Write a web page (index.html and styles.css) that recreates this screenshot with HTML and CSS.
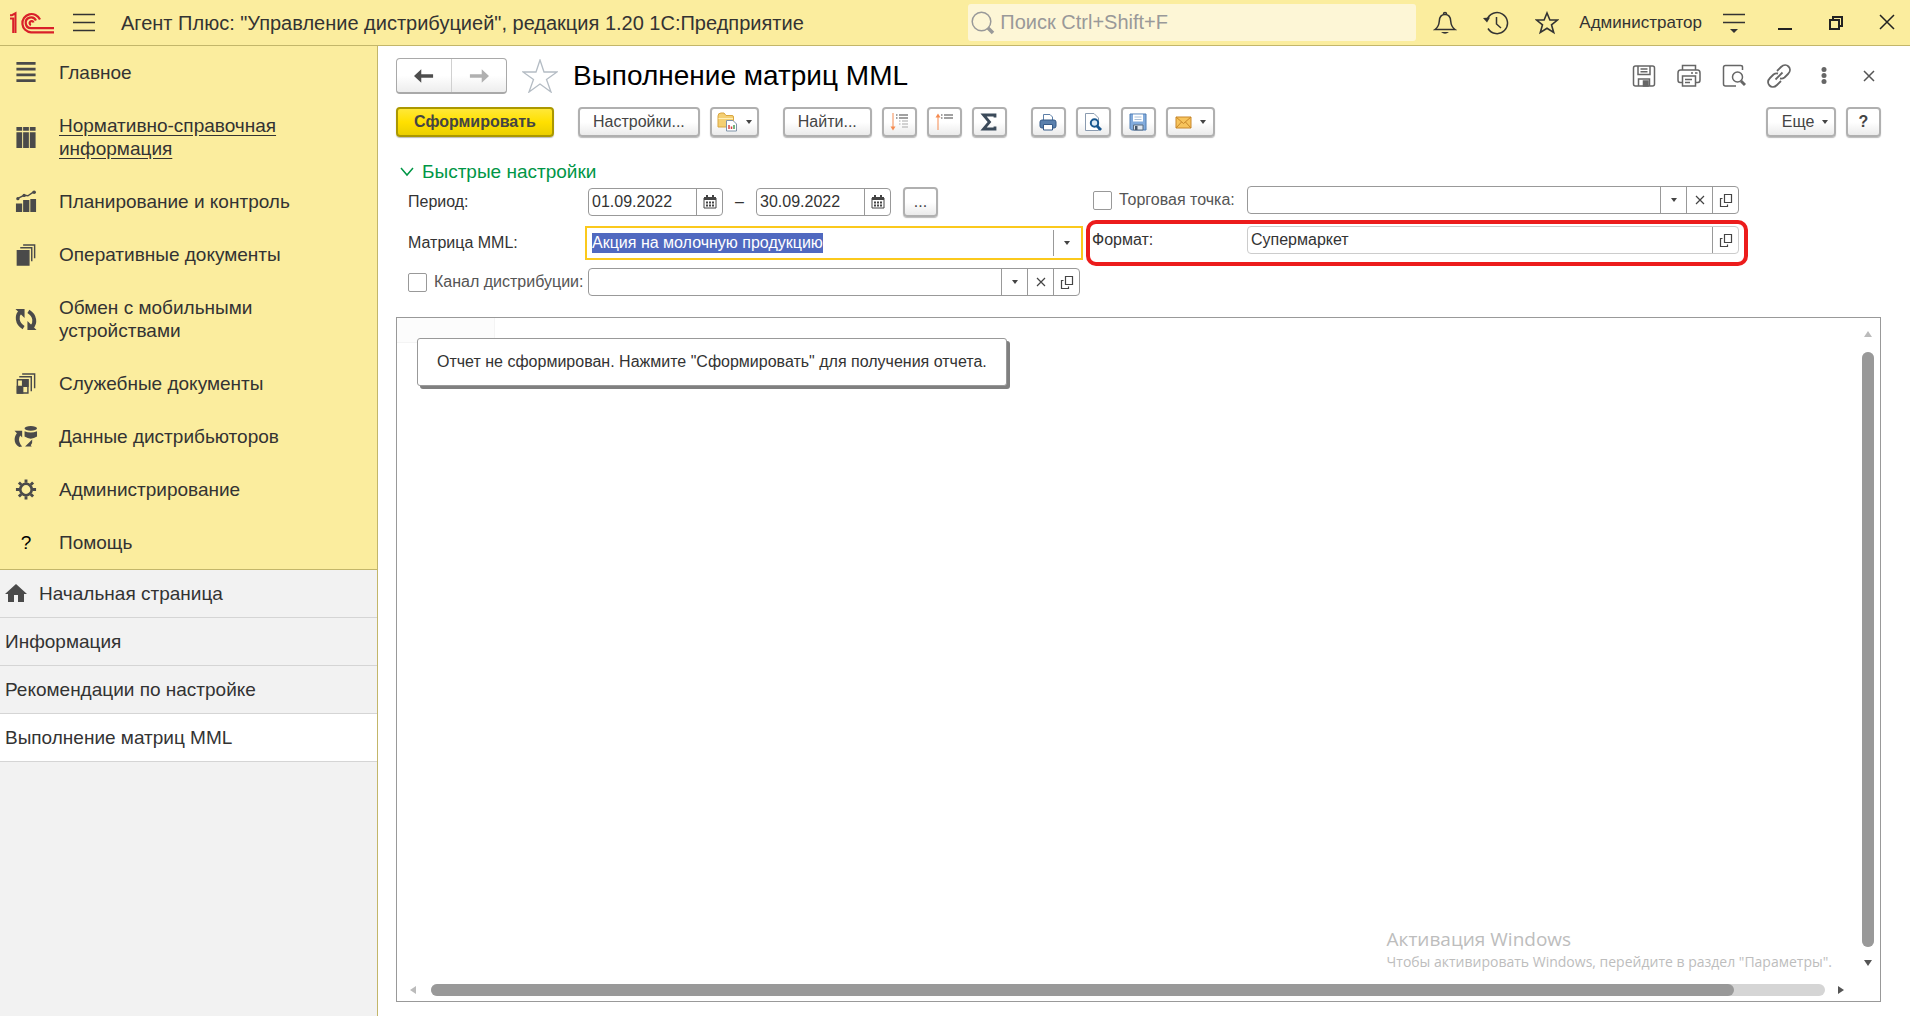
FILE: index.html
```html
<!DOCTYPE html>
<html lang="ru">
  <head>
    <meta charset="utf-8">
    <meta name="viewport" content="width=device-width, initial-scale=1.0">
    <title>Выполнение матриц MML</title>
    <link rel="stylesheet" href="styles.css">
  </head>
  <body>
    <header class="topbar">
      <svg class="logo" width="46" height="24" viewBox="0 0 46 24" fill="none" stroke="#d9202a" stroke-width="2.2">
        <path d="M1 7.500H4.200V22M1 4.200H3L6.500 2.300V22" stroke-width="2"/>
        <path d="M31 8.500A9.200 9.200 0 1 0 22 21.400H45"/>
        <path d="M27 9.500A5.400 5.400 0 1 0 22 17.200H45"/>
        <path d="M24.500 11.500A2 2 0 1 0 22 14"/>
      </svg>
      <button class="icon" aria-label="Меню">
        <svg width="24" height="24" viewBox="0 0 24 24" stroke="#333" stroke-width="1.500"><path d="M1 3.500H23M1 11.500H23M1 19.500H23"/></svg>
      </button>
      <div class="appTitle">Агент Плюс: "Управление дистрибуцией", редакция 1.20 1С:Предприятие</div>
      <div class="search">
        <svg width="24" height="24" viewBox="0 0 24 24" fill="none" stroke="#999"><circle cx="10.500" cy="10.500" r="9.300" stroke-width="1.500"/><path d="M17 17L22 22" stroke-width="3.500"/></svg>
        <input type="text" placeholder="Поиск Ctrl+Shift+F" aria-label="Поиск">
      </div>
      <div class="topTools">
        <button class="icon" aria-label="Уведомления">
          <svg width="24" height="24" viewBox="0 0 24 24" fill="none" stroke="#333" stroke-width="1.500"><path d="M2 18.500C5.500 16 6 14 6.300 10C6.500 6 8.500 3.500 12 3.500S17.500 6 17.700 10C18 14 18.500 16 22 18.500Z"/><path d="M10.500 3A1.500 1.500 0 0 1 13.500 3"/><path d="M8 21H16Q12 24.500 8 21Z" fill="#333" stroke="none"/></svg>
        </button>
        <button class="icon" aria-label="История">
          <svg width="26" height="24" viewBox="0 0 26 24" fill="none" stroke="#333" stroke-width="1.500"><path d="M4 9A10.500 10.500 0 1 1 5 17.500"/><path d="M0 7L7 6.500L4 11.500Z" fill="#333" stroke="none"/><path d="M13.500 6V13L18 17"/></svg>
        </button>
        <button class="icon" aria-label="Избранное">
          <svg width="24" height="24" viewBox="0 0 24 24" fill="none" stroke="#333" stroke-width="1.600"><path d="M12 2L14.900 9H22.500L16.500 13.800L18.700 21.500L12 17.300L5.300 21.500L7.500 13.800L1.500 9H9.100Z"/></svg>
        </button>
        <span class="user">Администратор</span>
        <button class="icon" aria-label="Сервис">
          <svg width="24" height="24" viewBox="0 0 24 24"><path d="M1 3.500H23M1 11.500H23" stroke="#333" stroke-width="1.500"/><path d="M8 18H16L12 22Z" fill="#333"/></svg>
        </button>
        <button class="icon" aria-label="Свернуть">
          <svg width="24" height="24" viewBox="0 0 24 24"><path d="M5 18H19" stroke="#222" stroke-width="2"/></svg>
        </button>
        <button class="icon" aria-label="Восстановить">
          <svg width="24" height="24" viewBox="0 0 24 24" fill="none" stroke="#222" stroke-width="2"><path d="M6 9H15V18H6ZM9 9V6H18V15H15"/></svg>
        </button>
        <button class="icon" aria-label="Закрыть">
          <svg width="24" height="24" viewBox="0 0 24 24" stroke="#222" stroke-width="1.500"><path d="M5 4L19 18M19 4L5 18"/></svg>
        </button>
      </div>
    </header>
    <div class="workspace">
      <aside class="sidebar">
        <nav class="sections">
          <a href="#">
            <svg width="24" height="24" viewBox="0 0 24 24" stroke="#4a4a4a" stroke-width="3"><path d="M2 2.500H22M2 8.500H22M2 14.500H22M2 20.500H22"/></svg>
            <span>Главное</span>
          </a>
          <a href="#" class="hovered">
            <svg width="24" height="24" viewBox="0 0 24 24" fill="#4a4a4a"><path d="M2 1H8V5H2ZM9 1H15V5H9ZM16 1H22V5H16ZM2 6.500H8V23H2ZM9 6.500H15V23H9ZM16 6.500H22V23H16Z"/></svg>
            <span>Нормативно-справочная информация</span>
          </a>
          <a href="#">
            <svg width="24" height="24" viewBox="0 0 24 24" fill="#4a4a4a"><path d="M1.500 14H8V23H1.500ZM9 10.500H15.500V23H9ZM16.500 9.500H22.500V23H16.500Z"/><path d="M3 9L10 5.500L14 6L20 2" fill="none" stroke="#4a4a4a" stroke-width="1.500"/><circle cx="3.500" cy="9" r="1.700"/><circle cx="10" cy="5.700" r="1.700"/><circle cx="20.500" cy="2.300" r="1.900"/></svg>
            <span>Планирование и контроль</span>
          </a>
          <a href="#">
            <svg width="24" height="24" viewBox="0 0 24 24" fill="none" stroke="#4a4a4a" stroke-width="1.500"><path d="M3 8H15V23H3Z" fill="#4a4a4a"/><path d="M6 5H18V19M9 2H21V16"/></svg>
            <span>Оперативные документы</span>
          </a>
          <a href="#">
            <svg width="24" height="24" viewBox="0 0 24 24" fill="none" stroke="#4a4a4a" stroke-width="4"><path d="M6 4C2 8 2 16 9.500 20.500"/><path d="M18 20C22 16 22 8 14.500 3.500"/><path d="M1 1H10.500V10.500ZM23 23H13.500V13.500Z" fill="#4a4a4a" stroke="none"/></svg>
            <span>Обмен с мобильными устройствами</span>
          </a>
          <a href="#">
            <svg width="24" height="24" viewBox="0 0 24 24" fill="none" stroke="#4a4a4a" stroke-width="1.500"><path d="M3 8H14V22H3Z"/><path d="M8.500 8H14V15H8.500ZM3 15H8.500V22H3Z" fill="#4a4a4a"/><path d="M5 5H17.500V20M8 2H21V17"/></svg>
            <span>Служебные документы</span>
          </a>
          <a href="#">
            <svg width="24" height="24" viewBox="0 0 24 24" fill="#4a4a4a"><ellipse cx="17" cy="3.500" rx="6.500" ry="2.500"/><path d="M10.500 6.500Q17 9 23.500 6.500V12Q17 16.500 10.500 12Z"/><path d="M0 6H8V13L6 11C4 14 4 18 8 22.500L5 23C-1 20 -1 13 2.500 8.500Z"/><path d="M18.500 15L11 22.500H18L17 21Q19 19 18.500 15Z"/></svg>
            <span>Данные дистрибьюторов</span>
          </a>
          <a href="#">
            <svg width="24" height="24" viewBox="0 0 24 24" fill="none" stroke="#4a4a4a"><circle cx="12" cy="12" r="6" stroke-width="2.800"/><path d="M12 1.500V5M12 19V22.500M1.500 12H5M19 12H22.500M4.600 4.600L7 7M17 17L19.400 19.400M19.400 4.600L17 7M7 17L4.600 19.400" stroke-width="3"/></svg>
            <span>Администрирование</span>
          </a>
          <a href="#">
            <span class="question">?</span>
            <span>Помощь</span>
          </a>
        </nav>
        <nav class="windows">
          <a href="#">
            <svg width="22" height="20" viewBox="0 0 22 20" fill="#4a4a4a"><path d="M11 0L22 10H19V18H13V11H9V18H3V10H0Z"/></svg>
            Начальная страница
          </a>
          <a href="#">Информация</a>
          <a href="#">Рекомендации по настройке</a>
          <a href="#" class="active">Выполнение матриц MML</a>
        </nav>
      </aside>
      <main>
        <div class="pageHead">
          <div class="history">
            <button aria-label="Назад"><svg width="20" height="18" viewBox="0 0 22 18"><path d="M0 9L8 1.500V7H21V11H8V16.500Z" fill="#4d4d4d"/></svg></button>
            <button aria-label="Вперед"><svg width="20" height="18" viewBox="0 0 22 18"><path d="M22 9L14 1.500V7H1V11H14V16.500Z" fill="#b0b0b0"/></svg></button>
          </div>
          <button class="icon" aria-label="В избранное">
            <svg width="36" height="34" viewBox="0 0 36 34" fill="none" stroke="#b4bcc4" stroke-width="1.300"><path d="M18 1L22 13H35L24.500 20.500L29 33L18 25L7 33L11.500 20.500L1 13H14Z"/></svg>
          </button>
          <h1>Выполнение матриц MML</h1>
          <div class="pageTools">
            <button class="icon" aria-label="Сохранить">
              <svg width="24" height="24" viewBox="0 0 24 24" fill="none" stroke="#666" stroke-width="1.500"><rect x="1.500" y="2" width="21" height="20" rx="2"/><path d="M6 2V10.500H18V2M8.500 5H15.500M8.500 7.800H15.500M6.500 22V15H17.500V22"/><path d="M11.500 17H16V22H11.500Z" fill="#666"/></svg>
            </button>
            <button class="icon" aria-label="Печать">
              <svg width="24" height="24" viewBox="0 0 24 24" fill="none" stroke="#666" stroke-width="1.500"><path d="M5.500 6V1.500H18.500V6M5 18.500H3Q1 18.500 1 16V9Q1 6 3.500 6H20.500Q23 6 23 9V16Q23 18.500 21 18.500H19M5.500 12H18.500V22H5.500Z"/><path d="M8 15.500H15M8 18.500H13M14 9H16M18 9H20.500"/></svg>
            </button>
            <button class="icon" aria-label="Просмотр">
              <svg width="24" height="24" viewBox="0 0 24 24" fill="none" stroke="#666" stroke-width="1.500"><path d="M20.500 6V3Q20.500 1.500 18.500 1.500H3.500Q1.500 1.500 1.500 3.500V20Q1.500 22 3.500 22H14"/><circle cx="15.500" cy="13" r="5"/><path d="M19 17L23 21" stroke-width="3"/></svg>
            </button>
            <button class="icon" aria-label="Ссылка">
              <svg width="24" height="24" viewBox="0 0 24 24" fill="none" stroke="#666" stroke-width="1.800"><path d="M10 7L14 3C17 0 20 1 21.500 2.500S24 7 21 10L17.500 13.500Q15.500 15 13 14.500M14 17L10 21C7 24 4 23 2.500 21.500S0 17 3 14L6.500 10.500Q8.500 9 11 9.500M8.500 15.500L15.500 8.500"/></svg>
            </button>
            <button class="icon" aria-label="Еще">
              <svg width="24" height="24" viewBox="0 0 24 24" fill="#666"><circle cx="12" cy="5.500" r="2.500"/><circle cx="12" cy="11.500" r="2.500"/><circle cx="12" cy="17.500" r="2.500"/></svg>
            </button>
            <button class="icon" aria-label="Закрыть">
              <svg width="24" height="24" viewBox="0 0 24 24" stroke="#555" stroke-width="1.500"><path d="M7 7L17 17M17 7L7 17"/></svg>
            </button>
          </div>
        </div>

        <div class="toolbar">
          <div class="group">
            <button class="button primary">Сформировать</button>
          </div>
          <div class="group">
            <button class="button wide">Настройки...</button>
            <button class="button drop" aria-label="Варианты">
              <svg width="21" height="20" viewBox="0 0 21 20"><path d="M1 4Q1 1 4 1H7L9 3.500H15Q16.500 3.500 16.500 5V15H1Z" fill="#f4cf72" stroke="#d9a640"/><path d="M1.500 6.500H16" stroke="#fff0b8"/><path d="M9.500 8.500H16L19.500 12V19H9.500Z" fill="#fff" stroke="#7f93a8"/><path d="M12 13V17M14.500 14.500V17" stroke="#d84343" stroke-width="1.500"/><path d="M17 13V17" stroke="#4a9d55" stroke-width="1.500"/></svg>
              <i class="arrow"></i>
            </button>
          </div>
          <div class="group">
            <button class="button wide">Найти...</button>
            <button class="button square" aria-label="Развернуть группы">
              <svg width="20" height="20" viewBox="0 0 20 20"><path d="M4 1V15" stroke="#f58b50"/><path d="M1.500 14.500H6.500L4 18.500Z" fill="#f58b50"/><path d="M7 3H8.500M10 3H19M7 6H8.500M10 6H19" stroke="#444" stroke-width="1.200"/><path d="M10 9H11.500M13 9H19M10 12H11.500M13 12H19M13 15H19" stroke="#aaa" stroke-width="1.200"/></svg>
            </button>
            <button class="button square" aria-label="Свернуть группы">
              <svg width="20" height="20" viewBox="0 0 20 20"><path d="M4 18V5" stroke="#f58b50"/><path d="M1.500 5.500H6.500L4 1.500Z" fill="#f58b50"/><path d="M7 3H8.500M10 3H19M7 6H8.500M10 6H19" stroke="#444" stroke-width="1.200"/></svg>
            </button>
            <button class="button square" aria-label="Сумма">
              <svg width="18" height="18" viewBox="0 0 18 18"><path d="M15 4.500V2H3.500L9.500 9L3.500 16H15V13.500" fill="none" stroke="#3b4a5a" stroke-width="2.800"/></svg>
            </button>
          </div>
          <div class="group">
            <button class="button square" aria-label="Печать">
              <svg width="18" height="18" viewBox="0 0 18 18"><path d="M4.500 7V1.500H11L13.500 4V7" fill="#fff" stroke="#5d7fa8"/><rect x="1" y="7" width="16" height="8" rx="2" fill="#5a80ad" stroke="#355a88"/><path d="M4.500 11.500H13.500V17H4.500Z" fill="#fff" stroke="#355a88"/></svg>
            </button>
            <button class="button square" aria-label="Предварительный просмотр">
              <svg width="18" height="20" viewBox="0 0 18 20"><path d="M1.500 1.500H10L14.500 6V18.500H1.500Z" fill="#fff" stroke="#8a9bb0"/><circle cx="10.500" cy="11" r="3.700" fill="#dceaf5" stroke="#17568f" stroke-width="2"/><path d="M13 14L17 18" stroke="#17568f" stroke-width="2.800"/></svg>
            </button>
            <button class="button square" aria-label="Сохранить">
              <svg width="18" height="18" viewBox="0 0 18 18"><path d="M1 1H17V17H2.500L1 15.500Z" fill="#82abdc" stroke="#4f7cb3"/><path d="M4 1.500H14V8.500H4Z" fill="#fff"/><path d="M5.500 4H12.500M5.500 6.500H12.500" stroke="#a8bfd8"/><path d="M4.500 12H14V17H4.500Z" fill="#dfe6ee" stroke="#5b6c80"/><path d="M6 13H8.500V17H6Z" fill="#44566b"/></svg>
            </button>
            <button class="button drop" aria-label="Отправить">
              <svg width="17" height="13" viewBox="0 0 17 13"><path d="M1 1H16V12H1Z" fill="#f7c45c" stroke="#c8872a"/><path d="M1 1L8.500 7.500L16 1M1 12L6.500 6M16 12L10.500 6" fill="none" stroke="#c8872a"/></svg>
              <i class="arrow"></i>
            </button>
          </div>
          <div class="group last">
            <button class="button drop more">Еще<i class="arrow"></i></button>
            <button class="button square"><b>?</b></button>
          </div>
        </div>

        <h2>
          <svg width="16" height="12" viewBox="0 0 16 12" fill="none" stroke="#009646" stroke-width="1.500"><path d="M2 2L8 9L14 2"/></svg>
          Быстрые настройки
        </h2>

        <form class="settings" onsubmit="return false">
          <div class="column">
            <div class="row periodRow">
              <label class="caption" for="date-from">Период:</label>
              <div class="field date">
                <input id="date-from" type="text" value="01.09.2022">
                <button type="button" aria-label="Календарь"><svg width="14" height="14" viewBox="0 0 14 14"><use href="#calendar"/></svg></button>
              </div>
              <span class="dash">–</span>
              <div class="field date">
                <input id="date-to" type="text" value="30.09.2022" aria-label="Конец периода">
                <button type="button" aria-label="Календарь"><svg width="14" height="14" viewBox="0 0 14 14"><use href="#calendar"/></svg></button>
              </div>
              <button type="button" class="button square dots">...</button>
            </div>
            <div class="row focusRow">
              <label class="caption" for="matrix">Матрица MML:</label>
              <div class="field focused">
                <input id="matrix" type="text" value="Акция на молочную продукцию">
                <button type="button" aria-label="Выбрать"><i class="arrow"></i></button>
              </div>
            </div>
            <div class="row">
              <div class="caption check">
                <input id="channel-on" type="checkbox">
                <label for="channel-on">Канал дистрибуции:</label>
              </div>
              <div class="field">
                <input id="channel" type="text" aria-label="Канал дистрибуции">
                <button type="button" aria-label="Выбрать"><i class="arrow"></i></button>
                <button type="button" aria-label="Очистить"><svg width="10" height="10" viewBox="0 0 10 10"><use href="#cross"/></svg></button>
                <button type="button" aria-label="Открыть"><svg width="14" height="14" viewBox="0 0 14 14"><use href="#open"/></svg></button>
              </div>
            </div>
          </div>
          <div class="column right">
            <div class="row">
              <div class="caption check">
                <input id="outlet-on" type="checkbox">
                <label for="outlet-on">Торговая точка:</label>
              </div>
              <div class="field">
                <input id="outlet" type="text" aria-label="Торговая точка">
                <button type="button" aria-label="Выбрать"><i class="arrow"></i></button>
                <button type="button" aria-label="Очистить"><svg width="10" height="10" viewBox="0 0 10 10"><use href="#cross"/></svg></button>
                <button type="button" aria-label="Открыть"><svg width="14" height="14" viewBox="0 0 14 14"><use href="#open"/></svg></button>
              </div>
            </div>
            <div class="row marked">
              <label class="caption" for="format">Формат:</label>
              <div class="field readonly">
                <input id="format" type="text" value="Супермаркет" readonly>
                <button type="button" aria-label="Открыть"><svg width="14" height="14" viewBox="0 0 14 14"><use href="#open"/></svg></button>
              </div>
            </div>
          </div>
        </form>

        <section class="report">
          <div class="sheet">
            <div class="cell"></div>
            <p class="message">Отчет не сформирован. Нажмите "Сформировать" для получения отчета.</p>
            <div class="watermark">
              <strong>Активация Windows</strong>
              <span>Чтобы активировать Windows, перейдите в раздел "Параметры".</span>
            </div>
          </div>
          <div class="scroll vertical">
            <i class="tip up"></i>
            <div class="track"><div class="thumb"></div></div>
            <i class="tip down"></i>
          </div>
          <div class="scroll horizontal">
            <i class="tip left"></i>
            <div class="track"><div class="thumb"></div></div>
            <i class="tip rightTip"></i>
          </div>
        </section>
      </main>
    </div>
    <svg class="symbols" width="0" height="0">
      <symbol id="calendar" viewBox="0 0 14 14"><path d="M1 3H13V13H1Z" fill="none" stroke="#444"/><path d="M1 2H13V5H1ZM3 0H5V3H3ZM9 0H11V3H9ZM3 6.500H5V8.500H3ZM6 6.500H8V8.500H6ZM9 6.500H11V8.500H9ZM3 9.500H5V11.500H3ZM6 9.500H8V11.500H6ZM9 9.500H11V11.500H9Z" fill="#444"/></symbol>
      <symbol id="cross" viewBox="0 0 10 10"><path d="M1 1L9 9M9 1L1 9" stroke="#444" stroke-width="1.200"/></symbol>
      <symbol id="open" viewBox="0 0 14 14"><path d="M5.500 1.500H12.500V9.500H5.500ZM3.500 5.500H1.500V13.500H8.500V11.500" fill="none" stroke="#444" stroke-width="1.200"/></symbol>
    </svg>
    <script type="text/javascript">
      var matrixInput = document.getElementById("matrix")
      matrixInput.focus()
      matrixInput.select()
    </script>
  </body>
</html>
```
FILE: styles.css
```css
:root {
  --yellow: #fbed9e;
  --line: #c3b66a;
  --text: #333;
  --border: #999;
}

* {
  box-sizing: border-box;
}
body {
  margin: 0;
  height: 100vh;
  display: flex;
  flex-direction: column;
  background: #fff;
  color: var(--text);
  font: 16px/20px "Liberation Sans", Arial, sans-serif;
}
button, input {
  font: inherit;
  color: inherit;
  margin: 0;
}
button {
  padding: 0;
  border: 0;
  background: none;
}
a {
  color: inherit;
  text-decoration: none;
}
svg {
  display: block;
  flex: none;
}
.symbols {
  position: absolute;
}
.icon {
  display: flex;
  justify-content: center;
  align-items: center;
  min-width: 24px;
}

/* top bar */
.topbar {
  display: flex;
  align-items: center;
  height: 46px;
  padding: 0 11px 0 9px;
  background: var(--yellow);
  border-bottom: 1px solid var(--line);
}
.logo {
  margin-right: 17px;
}
.appTitle {
  margin-left: 25px;
  font-size: 20px;
  white-space: nowrap;
}
.search {
  display: flex;
  align-items: center;
  width: 448px;
  height: 37px;
  margin-left: auto;
  margin-right: 17px;
  padding-left: 3px;
  border-radius: 3px;
  background: #fdf6d6;
}
.search input {
  flex: 1;
  min-width: 0;
  border: 0;
  padding: 0 5px;
  background: none;
  font-size: 20px;
}
.search input::placeholder {
  color: #999;
}
.topTools {
  display: flex;
  align-items: center;
  gap: 27px;
}
.topTools .icon {
  width: 24px;
}
.user {
  margin: 0 -7px;
  font-size: 17px;
}

/* sidebar */
.workspace {
  flex: 1;
  min-height: 0;
  display: flex;
}
.sidebar {
  width: 378px;
  flex: none;
  background: #f2f2f2;
  border-right: 1px solid var(--line);
  font-size: 19px;
  line-height: 23px;
}
.sections {
  background: var(--yellow);
  border-bottom: 1px solid var(--line);
}
.sections a {
  display: flex;
  align-items: center;
  gap: 21px;
  padding: 15px 60px 15px 14px;
}
.sections svg {
  height: 23px;
}
.sections .hovered {
  text-decoration: underline;
  text-underline-offset: 3px;
}
.question {
  width: 24px;
  text-align: center;
  color: #000;
}
.windows a {
  display: flex;
  align-items: center;
  gap: 12px;
  height: 48px;
  padding-left: 5px;
  border-bottom: 1px solid #d5d5d5;
}
.windows .active {
  background: #fff;
}

/* page */
main {
  flex: 1;
  min-width: 0;
  display: flex;
  flex-direction: column;
  padding: 12px 29px 14px 18px;
}
.pageHead {
  display: flex;
  align-items: center;
  gap: 15px;
  height: 36px;
}
.history {
  display: flex;
  width: 111px;
  height: 36px;
  border: 1px solid #a9a9a9;
  border-bottom-width: 2px;
  border-radius: 4px;
  background: linear-gradient(#fff 50%, #ededed);
}
.history button {
  flex: 1;
  display: flex;
  align-items: center;
  justify-content: center;
}
.history button + button {
  border-left: 1px solid #d0d0d0;
}
h1 {
  margin: 0;
  color: #000;
  font-size: 28px;
  line-height: 34px;
  font-weight: normal;
}
.pageTools {
  display: flex;
  gap: 21px;
  margin-left: auto;
}
.toolbar {
  display: flex;
  gap: 24px;
  margin-top: 13px;
}
.group {
  display: flex;
  gap: 10px;
}
.group.last {
  margin-left: auto;
}
.button {
  display: flex;
  align-items: center;
  justify-content: center;
  height: 30px;
  border: 2px solid #b0b0b0;
  border-radius: 4px;
  background: linear-gradient(#fff 50%, #ebebeb);
  box-shadow: 0 1px 1px #bbb;
  color: #444;
}
.button.primary {
  width: 158px;
  border-color: #ab9800;
  background: linear-gradient(#ffe838, #ffe000 50%, #ebcf00);
  font-weight: bold;
}
.button.wide {
  padding: 0 13px;
}
.button.square {
  width: 35px;
}
.button.drop {
  width: 49px;
  gap: 8px;
}
.button.more {
  width: 70px;
  padding-left: 8px;
}
.arrow {
  border: 3px solid transparent;
  border-top: 4px solid #444;
  border-bottom: 0;
}
h2 {
  display: flex;
  align-items: center;
  gap: 7px;
  margin: 24px 0 0 3px;
  color: #009646;
  font-size: 19px;
  line-height: 22px;
  font-weight: normal;
}

/* quick settings */
.settings {
  display: flex;
  gap: 3px;
  padding: 3px 133px 0 12px;
}
.column {
  flex: 675;
  min-width: 0;
}
.column.right {
  flex: 662;
}
.row {
  display: flex;
  align-items: center;
  height: 28px;
  margin: 2px 3px 8px 0;
}
.row.periodRow {
  margin-bottom: 10px;
}
.caption {
  width: 180px;
  flex: none;
}
.check {
  display: flex;
  align-items: center;
  gap: 7px;
  color: #555;
}
.check input {
  appearance: none;
  width: 19px;
  height: 19px;
  border: 1px solid var(--border);
  border-radius: 2px;
  background: #fff;
}
.field {
  display: flex;
  flex: 1;
  min-width: 0;
  height: 28px;
  border: 1px solid var(--border);
  border-radius: 4px;
  background: #fff;
}
.field input {
  flex: 1;
  min-width: 0;
  padding: 0 3px;
  border: 0;
  outline: 0;
  background: none;
}
.field input::selection {
  background: #5069c0;
  color: #fff;
}
.field button {
  display: flex;
  align-items: center;
  justify-content: center;
  width: 26px;
  border-left: 1px solid var(--border);
}
.field.date {
  flex: 0 0 135px;
}
.dash {
  width: 33px;
  text-align: center;
}
.button.dots {
  margin-left: 12px;
}
.row.focusRow {
  height: 34px;
  margin-right: 0;
}
.focusRow .caption {
  width: 177px;
}
.field.focused {
  height: 34px;
  padding: 2px;
  border: 2px solid #fbc91c;
  border-radius: 0;
}
.right .row {
  margin: 0 9px 6px 7px;
}
.right .caption {
  width: 154px;
}
.right .row.marked {
  height: 46px;
  margin: 0;
  padding: 0 5px 7px 2px;
  border: 4px solid #ec1c1c;
  border-radius: 10px;
}
.marked .caption {
  width: 155px;
}
.field.readonly {
  border-color: #ccc;
}

/* report */
.report {
  flex: 1;
  min-height: 200px;
  display: grid;
  grid-template: 1fr 22px / 1fr 24px;
  margin-top: 13px;
  border: 1px solid var(--border);
}
.sheet {
  position: relative;
  overflow: hidden;
}
.cell {
  width: 98px;
  height: 25px;
  border: solid #f4f4f4;
  border-width: 0 1px 1px 0;
  background: #fcfcfc;
}
.message {
  position: absolute;
  left: 20px;
  top: 20px;
  margin: 0;
  padding: 13px 19px;
  border: 1px solid var(--border);
  border-radius: 3px;
  background: #fff;
  box-shadow: 3px 3px 0 #808080;
}
.watermark {
  position: absolute;
  right: 24px;
  bottom: 6px;
  display: flex;
  flex-direction: column;
  color: #bdbdbd;
  font-family: "Open Sans", "Noto Sans", sans-serif;
  font-size: 14px;
  line-height: 22px;
  white-space: nowrap;
}
.watermark strong {
  font-size: 19px;
  line-height: 24px;
  font-weight: normal;
}
.scroll {
  display: flex;
  align-items: center;
  justify-content: space-between;
}
.vertical {
  flex-direction: column;
  padding: 13px 0;
}
.horizontal {
  grid-column: 1 / 3;
  padding: 0 36px 0 13px;
}
.track {
  flex: 1;
  border-radius: 6px;
  background: #d5d5d5;
}
.thumb {
  border-radius: 6px;
  background: #999;
}
.vertical .track {
  width: 12px;
  margin: 15px 0 13px;
}
.vertical .thumb {
  height: 100%;
}
.horizontal .track {
  height: 12px;
  margin: 0 13px 0 15px;
}
.horizontal .thumb {
  width: 93.5%;
  height: 12px;
}
.tip {
  border: 4px solid transparent;
}
.up {
  border-top: 0;
  border-bottom: 6px solid #bbb;
}
.down {
  border-bottom: 0;
  border-top: 6px solid #555;
}
.left {
  border-left: 0;
  border-right: 6px solid #bbb;
}
.rightTip {
  border-right: 0;
  border-left: 6px solid #555;
}
```
